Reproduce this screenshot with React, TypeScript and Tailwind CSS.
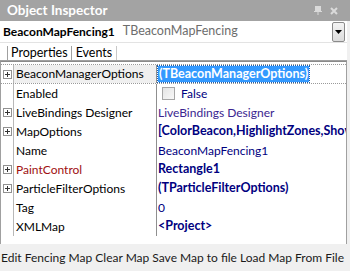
import React from "react";

type Row = {
  name: string;
  value: string;
  expand?: boolean;
  bold?: boolean;
  nameColor?: string;
  check?: boolean;
  selected?: boolean;
  valueColor?: string;
};

const rows: Row[] = [
  { name: "BeaconManagerOptions", value: "(TBeaconManagerOptions)", expand: true, bold: true, selected: true },
  { name: "Enabled", value: "False", check: true },
  { name: "LiveBindings Designer", value: "LiveBindings Designer", expand: true, valueColor: "text-[#3b2590]" },
  { name: "MapOptions", value: "[ColorBeacon,HighlightZones,ShowBeacons]", expand: true, bold: true },
  { name: "Name", value: "BeaconMapFencing1" },
  { name: "PaintControl", value: "Rectangle1", expand: true, bold: true, nameColor: "text-[#a01010]" },
  { name: "ParticleFilterOptions", value: "(TParticleFilterOptions)", expand: true, bold: true },
  { name: "Tag", value: "0" },
  { name: "XMLMap", value: "<Project>", bold: true },
];

function PlusBox() {
  return (
    <div className="w-[9px] h-[9px] border border-[#919191] bg-white flex items-center justify-center relative">
      <div className="absolute w-[5px] h-px bg-[#333]" />
      <div className="absolute w-px h-[5px] bg-[#333]" />
    </div>
  );
}

export default function App() {
  return (
    <div className="w-[350px] h-[271px] bg-[#f0f0f0] flex flex-col font-['Lato',sans-serif] text-[12px] overflow-hidden">
      {/* title */}
      <div className="h-[21px] bg-[#a3a3a3] flex items-center pl-[7px] pr-[12px] shrink-0">
        <span className="text-white font-bold text-[13.5px] leading-none">Object Inspector</span>
        <div className="ml-auto flex items-center gap-[8px] text-[#dadada]">
          <svg width="8" height="9" viewBox="0 0 8 9">
            <rect x="1" y="0" width="6" height="5" fill="currentColor" />
            <rect x="0" y="5" width="8" height="1" fill="currentColor" />
            <rect x="3.5" y="6" width="1" height="3" fill="currentColor" />
          </svg>
          <svg width="8" height="8" viewBox="0 0 8 8">
            <path d="M1 1 L7 7 M7 1 L1 7" stroke="currentColor" strokeWidth="2" />
          </svg>
        </div>
      </div>

      <div className="flex-1 flex flex-col pr-[3px]">
        {/* combo */}
        <div className="h-[22px] bg-white flex items-center border-b border-[#e3e3e3] shrink-0 text-[12px]">
          <span className="pl-[3px] font-bold text-black">BeaconMapFencing1</span>
          <span className="pl-[8px] text-[#6d6d6d] text-[12.5px]">TBeaconMapFencing</span>
          <div className="ml-auto mr-[2px] w-[13px] h-[20px] rounded-[2px] border border-[#8a8a8a] bg-gradient-to-b from-[#f4f4f4] to-[#dcdcdc] flex items-center justify-center">
            <svg width="7" height="4" viewBox="0 0 7 4">
              <path d="M0 0 H7 L3.5 4 Z" fill="#000" />
            </svg>
          </div>
        </div>

        {/* tabs */}
        <div className="h-[18px] bg-white flex items-stretch border-b border-[#a0a0a0] shrink-0 text-[12.5px]">
          <div className="w-[7px]" />
          <div className="flex items-center border-l border-r border-[#a0a0a0] px-[3px] mt-[3px] text-black">Properties</div>
          <div className="flex items-center border-r border-[#c8c8c8] px-[4px] mt-[3px] text-black">Events</div>
        </div>

        {/* grid */}
        <div className="flex-1 bg-white border-x border-[#a0a0a0] border-t border-t-[#8a8a8a] pt-[2px] flex flex-col">
          {rows.map((r) => (
            <div
              key={r.name}
              className={
                "flex shrink-0 " +
                (r.selected ? "h-[20px] border-y border-dotted border-[#9a9a9a]" : "h-[19px]")
              }
            >
              <div className="w-[13px] border-r border-[#b8b8b8] flex items-center pl-[2px] shrink-0">
                {r.expand && <PlusBox />}
              </div>
              <div
                className={
                  "w-[143px] shrink-0 flex items-center pl-[2px] border-r border-[#8f8f8f] whitespace-nowrap " +
                  (r.selected ? "bg-[#efefef] " : "") +
                  (r.nameColor ?? "text-black")
                }
              >
                {r.name}
              </div>
              <div className="flex-1 flex items-center pl-[1px] whitespace-nowrap overflow-hidden">
                {r.check && (
                  <div className="ml-[4px] mr-[6px] w-[13px] h-[13px] border border-[#a6a6a6] bg-gradient-to-br from-[#e4e4e4] to-[#f8f8f8]" />
                )}
                {r.selected ? (
                  <span className="bg-[#3399ff] text-white font-bold text-[12.5px] px-[1px] h-[16px] flex items-center outline-1 outline-dotted outline-[#1a5fb0]">
                    {r.value}
                  </span>
                ) : (
                  <span className={(r.bold ? "font-bold text-[12.5px] " : "") + (r.valueColor ?? "text-[#000080]")}>{r.value}</span>
                )}
              </div>
            </div>
          ))}
        </div>
      </div>

      {/* bottom links */}
      <div className="h-[27px] shrink-0 flex items-center pl-[1px] text-[#1a1a1a] whitespace-nowrap">
        Edit Fencing Map Clear Map Save Map to file Load Map From File
      </div>
    </div>
  );
}
